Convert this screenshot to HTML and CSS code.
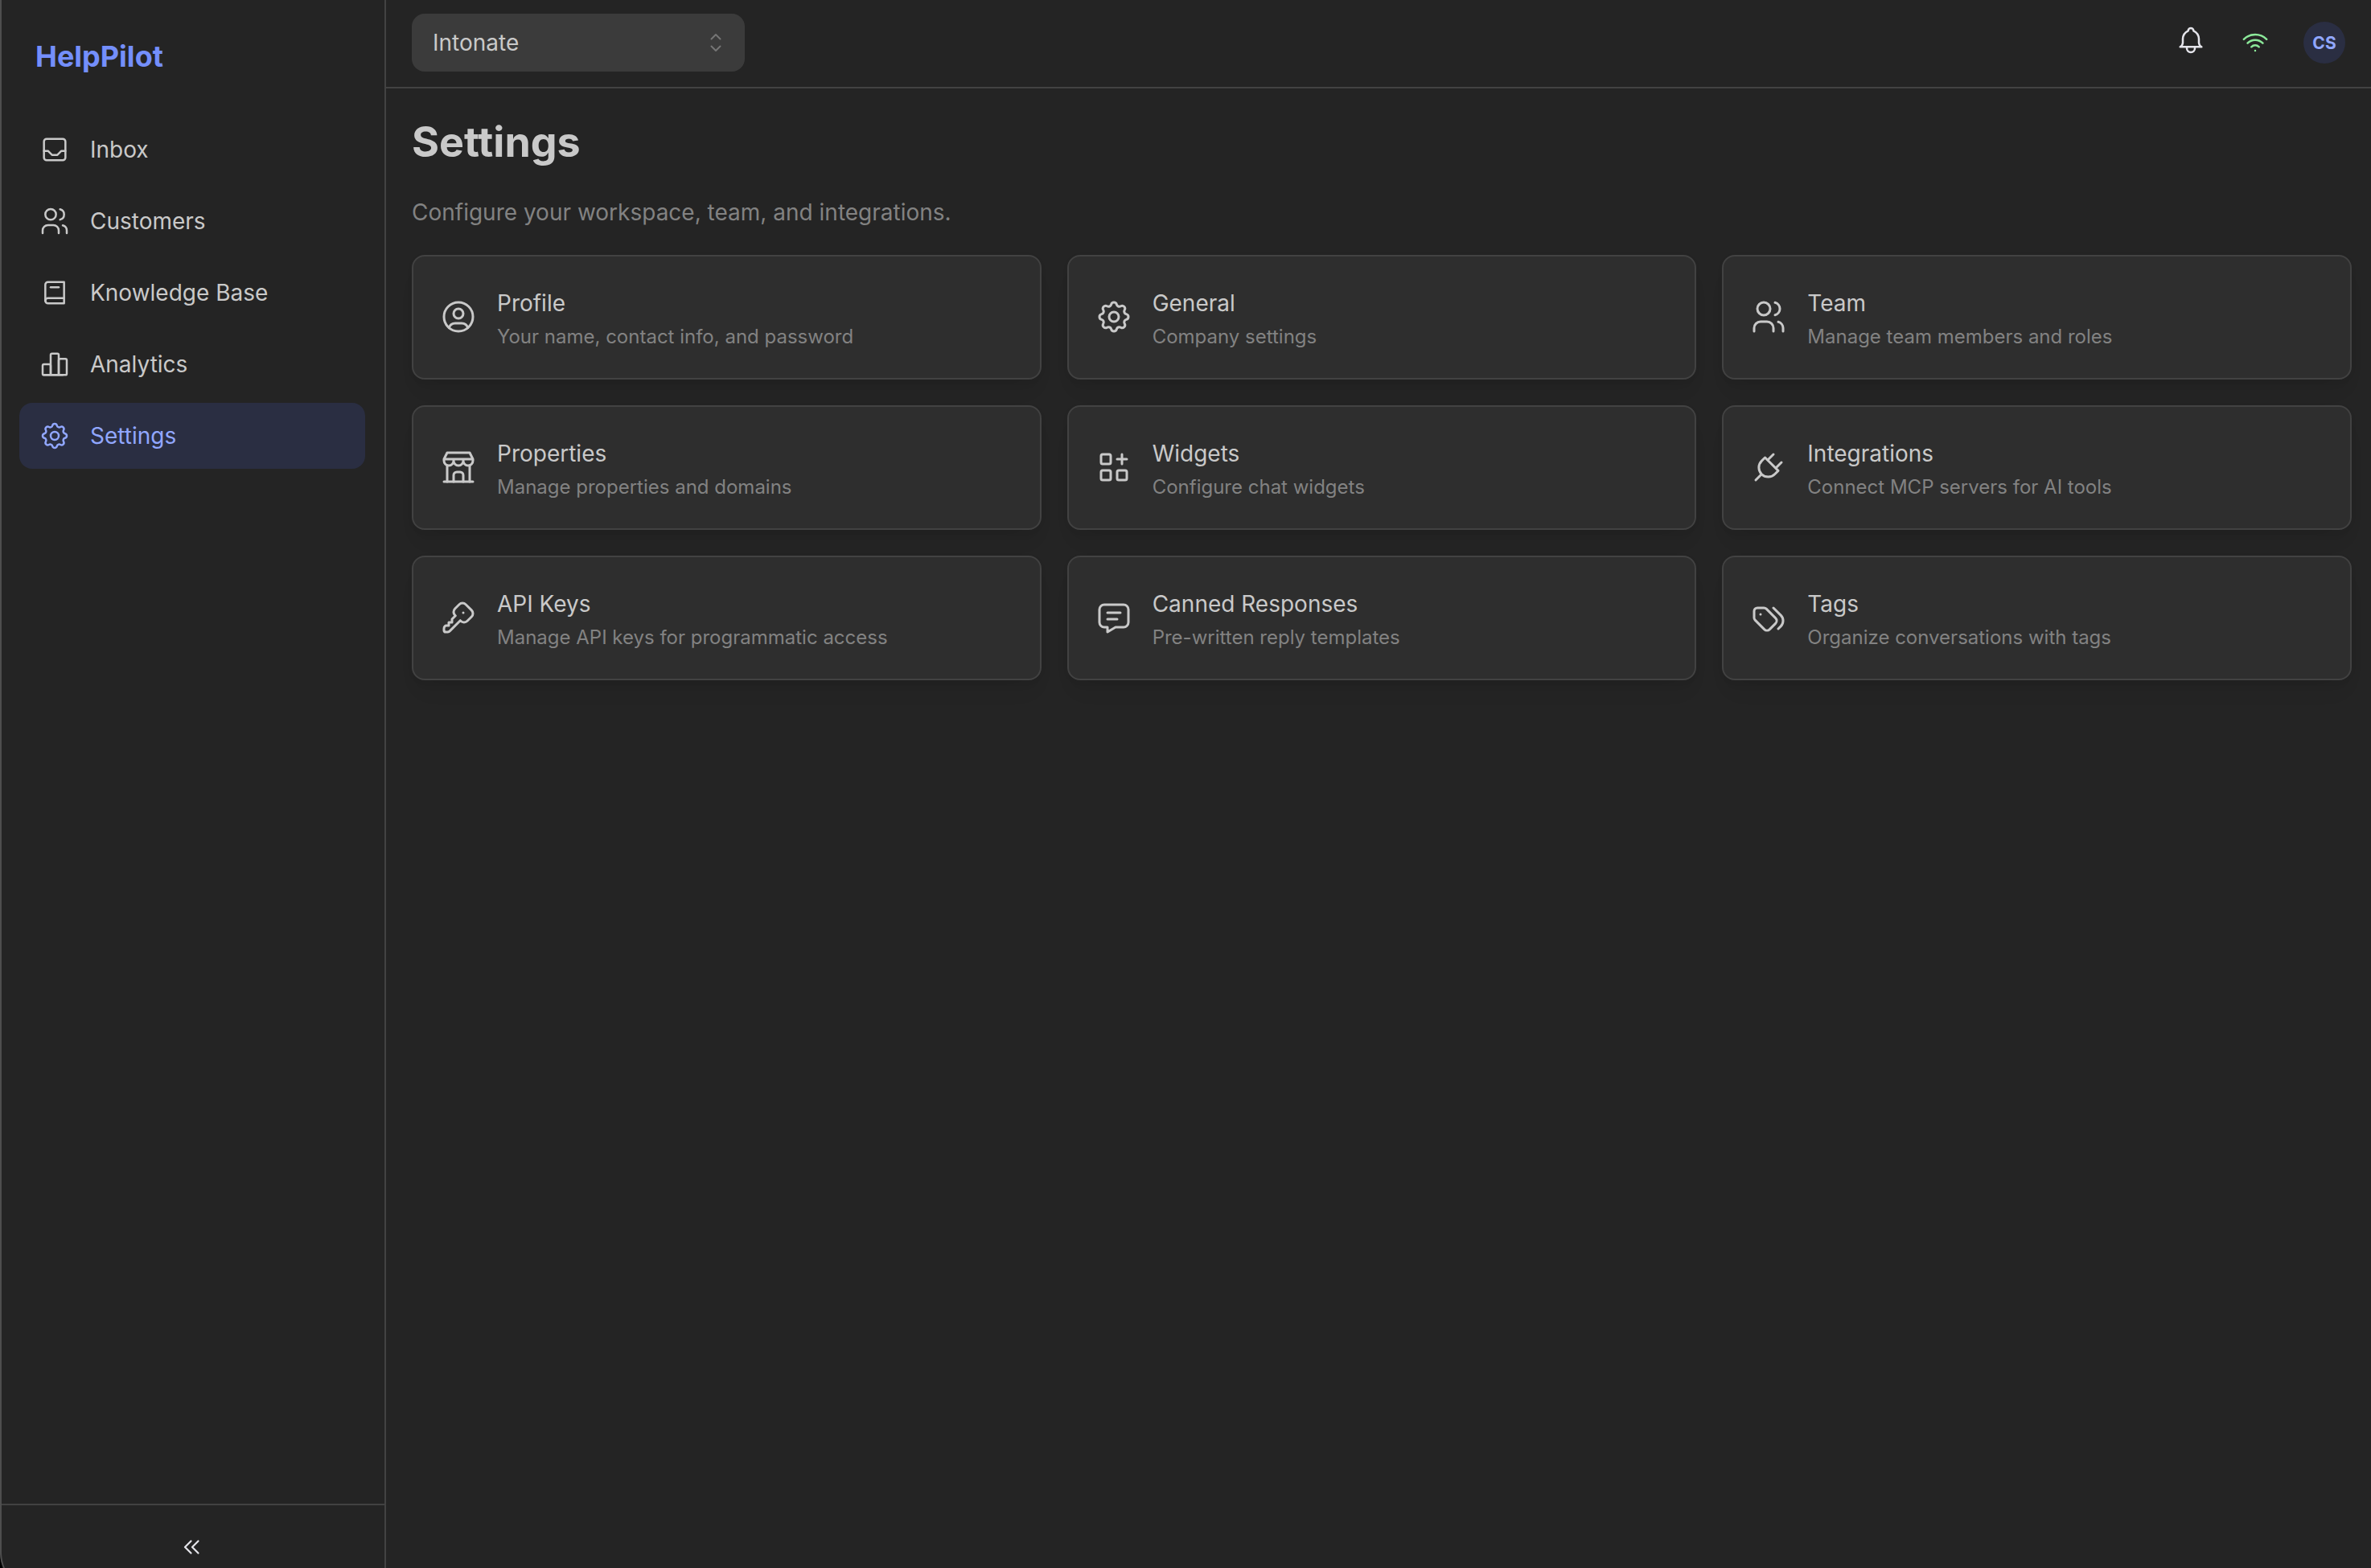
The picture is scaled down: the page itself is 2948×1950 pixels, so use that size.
FILE: index.html
```html
<!DOCTYPE html>
<html lang="en">
<head>
<meta charset="utf-8">
<meta name="viewport" content="width=device-width, initial-scale=1">
<title>Settings</title>
<link rel="stylesheet" href="styles.css">
</head>
<body>
<div class="app">
  <aside class="sidebar">
    <div class="logo">HelpPilot</div>
    <nav class="nav">
      <a class="nav-link" href="#inbox">
        <svg class="icon" viewBox="0 0 24 24"><path d="M4 6a2 2 0 0 1 2-2h12a2 2 0 0 1 2 2v12a2 2 0 0 1-2 2H6a2 2 0 0 1-2-2z"/><path d="M4 13h3l3 3h4l3-3h3"/></svg>
        <span>Inbox</span>
      </a>
      <a class="nav-link" href="#customers">
        <svg class="icon" viewBox="0 0 24 24"><circle cx="9" cy="7" r="4"/><path d="M3 21v-2a4 4 0 0 1 4-4h4a4 4 0 0 1 4 4v2"/><path d="M16 3.13a4 4 0 0 1 0 7.75"/><path d="M21 21v-2a4 4 0 0 0-3-3.85"/></svg>
        <span>Customers</span>
      </a>
      <a class="nav-link" href="#knowledge">
        <svg class="icon" viewBox="0 0 24 24"><path d="M19 4v16H7a2 2 0 0 1-2-2V6a2 2 0 0 1 2-2h12z"/><path d="M19 16H7a2 2 0 0 0-2 2"/><path d="M9 8h6"/></svg>
        <span>Knowledge Base</span>
      </a>
      <a class="nav-link" href="#analytics">
        <svg class="icon" viewBox="0 0 24 24"><path d="M3 13a1 1 0 0 1 1-1h4a1 1 0 0 1 1 1v6a1 1 0 0 1-1 1H4a1 1 0 0 1-1-1z"/><path d="M15 9a1 1 0 0 1 1-1h4a1 1 0 0 1 1 1v10a1 1 0 0 1-1 1h-4a1 1 0 0 1-1-1z"/><path d="M9 5a1 1 0 0 1 1-1h4a1 1 0 0 1 1 1v14a1 1 0 0 1-1 1h-4a1 1 0 0 1-1-1z"/><path d="M4 20h14"/></svg>
        <span>Analytics</span>
      </a>
      <a class="nav-link is-active" href="#settings" aria-current="page">
        <svg class="icon" viewBox="0 0 24 24"><path d="M10.325 4.317c.426-1.756 2.924-1.756 3.35 0a1.724 1.724 0 0 0 2.573 1.066c1.543-.94 3.31.826 2.37 2.37a1.724 1.724 0 0 0 1.065 2.572c1.756.426 1.756 2.924 0 3.35a1.724 1.724 0 0 0-1.066 2.573c.94 1.543-.826 3.31-2.37 2.37a1.724 1.724 0 0 0-2.572 1.065c-.426 1.756-2.924 1.756-3.35 0a1.724 1.724 0 0 0-2.573-1.066c-1.543.94-3.31-.826-2.37-2.37a1.724 1.724 0 0 0-1.065-2.572c-1.756-.426-1.756-2.924 0-3.35a1.724 1.724 0 0 0 1.066-2.573c-.94-1.543.826-3.31 2.37-2.37c1 .608 2.296.07 2.572-1.065z"/><circle cx="12" cy="12" r="3"/></svg>
        <span>Settings</span>
      </a>
    </nav>
    <div class="sidebar-footer">
      <button class="collapse" type="button" aria-label="Collapse sidebar">
        <svg class="icon icon-sm" viewBox="0 0 24 24"><path d="M11 7l-5 5l5 5"/><path d="M17 7l-5 5l5 5"/></svg>
      </button>
    </div>
  </aside>

  <div class="page">
    <header class="header">
      <div class="picker">
        <select class="picker-select" aria-label="Company">
          <option>Intonate</option>
        </select>
        <svg class="picker-arrows" viewBox="0 0 32 32"><path d="M10.500 11.500l5.500-5.500l5.500 5.500"/><path d="M10.500 20.500l5.500 5.500l5.500-5.500"/></svg>
      </div>
      <div class="header-actions">
        <button class="bell" type="button" aria-label="Notifications">
          <svg class="icon" viewBox="0 0 24 24"><path d="M10 5a2 2 0 1 1 4 0a7 7 0 0 1 4 6v3a4 4 0 0 0 2 3H4a4 4 0 0 0 2-3v-3a7 7 0 0 1 4-6"/><path d="M9 17v1a3 3 0 0 0 6 0v-1"/></svg>
        </button>
        <svg class="icon online" viewBox="0 0 24 24" role="img" aria-label="Connected"><path d="M12 18h.01"/><path d="M9.172 15.172a4 4 0 0 1 5.656 0"/><path d="M6.343 12.343a8 8 0 0 1 11.314 0"/><path d="M3.515 9.515c4.686-4.687 12.284-4.687 17 0"/></svg>
        <button class="avatar" type="button">CS</button>
      </div>
    </header>

    <main class="content">
      <h1 class="title">Settings</h1>
      <p class="subtitle">Configure your workspace, team, and integrations.</p>
      <div class="cards">
        <a class="card" href="#profile">
          <svg class="icon icon-lg" viewBox="0 0 24 24"><circle cx="12" cy="12" r="9"/><circle cx="12" cy="10" r="3"/><path d="M6.168 18.849A4 4 0 0 1 10 16h4a4 4 0 0 1 3.834 2.855"/></svg>
          <div class="card-body"><div class="card-title">Profile</div><div class="card-text">Your name, contact info, and password</div></div>
        </a>
        <a class="card" href="#general">
          <svg class="icon icon-lg" viewBox="0 0 24 24"><path d="M10.325 4.317c.426-1.756 2.924-1.756 3.35 0a1.724 1.724 0 0 0 2.573 1.066c1.543-.94 3.31.826 2.37 2.37a1.724 1.724 0 0 0 1.065 2.572c1.756.426 1.756 2.924 0 3.35a1.724 1.724 0 0 0-1.066 2.573c.94 1.543-.826 3.31-2.37 2.37a1.724 1.724 0 0 0-2.572 1.065c-.426 1.756-2.924 1.756-3.35 0a1.724 1.724 0 0 0-2.573-1.066c-1.543.94-3.31-.826-2.37-2.37a1.724 1.724 0 0 0-1.065-2.572c-1.756-.426-1.756-2.924 0-3.35a1.724 1.724 0 0 0 1.066-2.573c-.94-1.543.826-3.31 2.37-2.37c1 .608 2.296.07 2.572-1.065z"/><circle cx="12" cy="12" r="3"/></svg>
          <div class="card-body"><div class="card-title">General</div><div class="card-text">Company settings</div></div>
        </a>
        <a class="card" href="#team">
          <svg class="icon icon-lg" viewBox="0 0 24 24"><circle cx="9" cy="7" r="4"/><path d="M3 21v-2a4 4 0 0 1 4-4h4a4 4 0 0 1 4 4v2"/><path d="M16 3.13a4 4 0 0 1 0 7.75"/><path d="M21 21v-2a4 4 0 0 0-3-3.85"/></svg>
          <div class="card-body"><div class="card-title">Team</div><div class="card-text">Manage team members and roles</div></div>
        </a>
        <a class="card" href="#properties">
          <svg class="icon icon-lg" viewBox="0 0 24 24"><path d="M3 21h18"/><path d="M3 7v1a3 3 0 0 0 6 0V7m0 1a3 3 0 0 0 6 0V7m0 1a3 3 0 0 0 6 0V7H3l2-4h14l2 4"/><path d="M5 21V10.850"/><path d="M19 21V10.850"/><path d="M9 21v-4a2 2 0 0 1 2-2h2a2 2 0 0 1 2 2v4"/></svg>
          <div class="card-body"><div class="card-title">Properties</div><div class="card-text">Manage properties and domains</div></div>
        </a>
        <a class="card" href="#widgets">
          <svg class="icon icon-lg" viewBox="0 0 24 24"><rect x="4" y="4" width="6" height="6" rx="1"/><rect x="4" y="14" width="6" height="6" rx="1"/><rect x="14" y="14" width="6" height="6" rx="1"/><path d="M14 7h6"/><path d="M17 4v6"/></svg>
          <div class="card-body"><div class="card-title">Widgets</div><div class="card-text">Configure chat widgets</div></div>
        </a>
        <a class="card" href="#integrations">
          <svg class="icon icon-lg" viewBox="0 0 24 24"><path d="M9.785 6L18 14.215l-2.054 2.054a5.810 5.810 0 1 1-8.215-8.215z"/><path d="M4 20l3.500-3.500"/><path d="M15 4l-3.500 3.500"/><path d="M20 9l-3.500 3.500"/></svg>
          <div class="card-body"><div class="card-title">Integrations</div><div class="card-text">Connect MCP servers for AI tools</div></div>
        </a>
        <a class="card" href="#api-keys">
          <svg class="icon icon-lg" viewBox="0 0 24 24"><path d="M16.555 3.843l3.602 3.602a2.877 2.877 0 0 1 0 4.069l-2.643 2.643a2.877 2.877 0 0 1-4.069 0l-.301-.301l-6.558 6.558a2 2 0 0 1-1.239.578L5.172 21H4a1 1 0 0 1-.993-.883L3 20v-1.172a2 2 0 0 1 .467-1.284l.119-.13L4 17h2v-2h2v-2l2.144-2.144l-.301-.301a2.877 2.877 0 0 1 0-4.069l2.643-2.643a2.877 2.877 0 0 1 4.069 0z"/><path d="M15 9h.01"/></svg>
          <div class="card-body"><div class="card-title">API Keys</div><div class="card-text">Manage API keys for programmatic access</div></div>
        </a>
        <a class="card" href="#canned-responses">
          <svg class="icon icon-lg" viewBox="0 0 24 24"><path d="M8 9h8"/><path d="M8 13h6"/><path d="M18 4a3 3 0 0 1 3 3v8a3 3 0 0 1-3 3h-5l-5 3v-3H6a3 3 0 0 1-3-3V7a3 3 0 0 1 3-3z"/></svg>
          <div class="card-body"><div class="card-title">Canned Responses</div><div class="card-text">Pre-written reply templates</div></div>
        </a>
        <a class="card" href="#tags">
          <svg class="icon icon-lg" viewBox="0 0 24 24"><path d="M3 8v4.172a2 2 0 0 0 .586 1.414l5.710 5.710a2.410 2.410 0 0 0 3.408 0l3.592-3.592a2.410 2.410 0 0 0 0-3.408l-5.710-5.710A2 2 0 0 0 9.172 6H5a2 2 0 0 0-2 2z"/><path d="M18 19l1.592-1.592a4.820 4.820 0 0 0 0-6.816L15 6"/><path d="M7 10h-.01"/></svg>
          <div class="card-body"><div class="card-title">Tags</div><div class="card-text">Organize conversations with tags</div></div>
        </a>
      </div>
    </main>
  </div>
</div>
</body>
</html>
```
FILE: styles.css
```css
:root {
  --bg: #242424;
  --surface: #2e2e2e;
  --line: #424242;
  --text: #c9c9c9;
  --dimmed: #828282;
  --accent: #91a7ff;
  --accent-soft: #2a2e42;
}

* {
  box-sizing: border-box;
}

body {
  margin: 0;
  background: var(--bg);
  color: var(--text);
  font-family: Inter, "Liberation Sans", sans-serif;
  font-size: 28px;
  line-height: 43px;
}

/* Edge of the window, rounded at the lower left */
body::after {
  content: "";
  position: fixed;
  inset: -60px -60px -32px 0;
  border: 2px solid #4e4e4e;
  border-bottom-left-radius: 52px;
  box-shadow: 0 0 0 40px #000;
  pointer-events: none;
}

button,
select {
  font-family: inherit;
  color: inherit;
  border: 0;
  margin: 0;
  padding: 0;
  background: none;
  cursor: pointer;
}

a {
  color: inherit;
  text-decoration: none;
}

.icon {
  width: 40px;
  height: 40px;
  flex: none;
  fill: none;
  stroke: currentColor;
  stroke-width: 1.5;
  stroke-linecap: round;
  stroke-linejoin: round;
}

.icon-sm {
  width: 36px;
  height: 36px;
}

.icon-lg {
  width: 48px;
  height: 48px;
}

.app {
  display: grid;
  grid-template-columns: 480px 1fr;
  min-height: 100vh;
}

/* Sidebar */
.sidebar {
  display: flex;
  flex-direction: column;
  border-right: 2px solid var(--line);
}

.logo {
  padding: 42px 44px 47px;
  color: #748ffc;
  font-size: 36px;
  font-weight: 700;
  line-height: 56px;
}

.nav {
  flex: 1;
  display: flex;
  flex-direction: column;
  gap: 7px;
  padding: 0 24px;
}

.nav-link {
  display: flex;
  align-items: center;
  gap: 24px;
  height: 82px;
  padding: 0 24px;
  border-radius: 16px;
}

.nav-link.is-active {
  background: var(--accent-soft);
  color: var(--accent);
}

.sidebar-footer {
  display: flex;
  justify-content: center;
  padding-top: 26px;
  border-top: 2px solid var(--line);
}

.collapse {
  display: flex;
  align-items: center;
  justify-content: center;
  width: 52px;
  height: 52px;
  color: #e4e4ea;
}

/* Header */
.header {
  display: flex;
  align-items: center;
  justify-content: space-between;
  padding: 17px 32px 19px;
  border-bottom: 2px solid var(--line);
}

.picker {
  position: relative;
  width: 414px;
}

.picker-select {
  display: block;
  appearance: none;
  width: 100%;
  height: 72px;
  padding: 0 64px 0 26px;
  border-radius: 16px;
  background: #3b3b3b;
  font-size: 28px;
}

.picker-arrows {
  position: absolute;
  top: 20px;
  right: 20px;
  width: 32px;
  height: 32px;
  fill: none;
  stroke: #757575;
  stroke-width: 2;
  stroke-linecap: round;
  stroke-linejoin: round;
  pointer-events: none;
}

.header-actions {
  display: flex;
  align-items: center;
  gap: 40px;
}

.bell {
  color: #e4e4ea;
  font-size: 28px;
}

.online {
  color: #8ce99a;
}

.avatar {
  width: 52px;
  height: 52px;
  border-radius: 50%;
  background: var(--accent-soft);
  color: var(--accent);
  font-size: 21px;
  font-weight: 700;
}

/* Content */
.content {
  padding: 33px 24px 32px 32px;
}

.title {
  margin: 0 0 32px;
  font-size: 52px;
  font-weight: 700;
  line-height: 68px;
}

.subtitle {
  margin: 0 0 31px;
  color: var(--dimmed);
}

.cards {
  display: grid;
  grid-template-columns: repeat(3, 1fr);
  gap: 32px;
}

.card {
  display: flex;
  align-items: center;
  gap: 24px;
  padding: 32px 32px 33px;
  border: 2px solid var(--line);
  border-radius: 16px;
  background: var(--surface);
  box-shadow: 0 2px 6px rgba(0, 0, 0, 0.05), 0 20px 30px -10px rgba(0, 0, 0, 0.05), 0 14px 14px -10px rgba(0, 0, 0, 0.04);
}

.card-body {
  padding-top: 2px;
}

.card-title {
  line-height: 48px;
}

.card-text {
  color: var(--dimmed);
  font-size: 24px;
  line-height: 36px;
}
```
